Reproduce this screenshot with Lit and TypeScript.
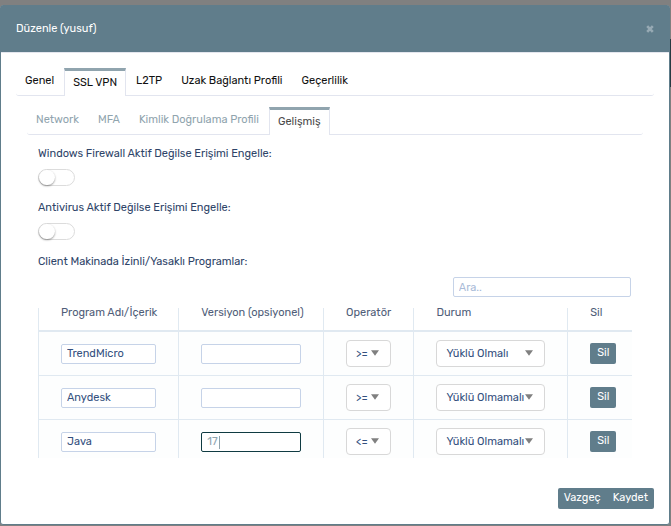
import { LitElement, html, css } from "lit";
import { customElement, state } from "lit/decorators.js";
import { classMap } from "lit/directives/class-map.js";

interface Program {
  name: string;
  version: string;
  operator: string;
  status: string;
  editing?: boolean;
}

const OPERATORS = [">=", "<=", "="];
const STATUSES = ["Yüklü Olmalı", "Yüklü Olmamalı"];

const arrow = html`<svg class="arrow" viewBox="0 0 8 6" aria-hidden="true">
  <path d="M0 0.3H8L4 5.7Z" fill="#808080" />
</svg>`;

@customElement("app-root")
export class AppRoot extends LitElement {
  @state() private tab = "SSL VPN";
  @state() private subTab = "Gelişmiş";
  @state() private programs: Program[] = [
    { name: "TrendMicro", version: "", operator: ">=", status: STATUSES[0] },
    { name: "Anydesk", version: "", operator: ">=", status: STATUSES[1] },
    { name: "Java", version: "17", operator: "<=", status: STATUSES[1], editing: true },
  ];

  static styles = css`
    :host {
      display: block;
      box-sizing: border-box;
      min-height: 100vh;
      padding: 5px 1px 1px 0;
      background: #808080;
      position: relative;
      font-family: Rubik, Roboto, "Liberation Sans", sans-serif;
      font-size: 11px;
      line-height: 16px;
      color: #2e4468;
    }
    * {
      box-sizing: border-box;
    }
    button,
    input,
    select {
      font: inherit;
      color: inherit;
      margin: 0;
    }
    button {
      border: 0;
      padding: 0;
      background: none;
      cursor: pointer;
    }
    .behind {
      position: absolute;
      right: 0;
      top: 39px;
      width: 1px;
      height: 48px;
      background: #283a42;
    }
    .dialog {
      display: flex;
      flex-direction: column;
      min-height: calc(100vh - 6px);
      border: 1px solid #607d8b;
      border-radius: 3px;
      background: #fff;
    }
    header {
      display: flex;
      align-items: center;
      justify-content: space-between;
      height: 46px;
      padding: 0 15px;
      background: #607d8b;
      color: #fff;
    }
    h1 {
      margin: 0;
      font-size: 11px;
      font-weight: 400;
    }
    .close {
      display: flex;
    }
    .close svg {
      width: 8px;
      height: 8px;
    }
    .body {
      flex: 1;
      padding: 15px 15px 0;
      border-top: 1px solid #e4e6ee;
    }
    .tabs {
      display: flex;
      gap: 1px;
      height: 28px;
      border-bottom: 1px solid #e2e5ef;
      border-radius: 3px;
    }
    .tabs button {
      height: 28px;
      padding: 0 8px 4px;
      border: 1px solid transparent;
      border-bottom: 0;
      color: #111;
      white-space: nowrap;
    }
    .tabs .active {
      border-color: #e2e5ef;
      border-top: 3px solid #90a4ae;
      padding-bottom: 2px;
      background: #fff;
    }
    .panel {
      padding: 11px 11px 0;
    }
    .tabs.sub button {
      color: #90a4ae;
    }
    .tabs.sub .active {
      color: #4a4a4a;
    }
    .content {
      padding: 11px 11px 0;
    }
    .label {
      display: block;
      height: 16px;
    }
    .switch {
      display: block;
      appearance: none;
      width: 37px;
      height: 17px;
      margin: 7px 0 14px;
      border: 1px solid #dcdcdc;
      border-radius: 9px;
      background: #fff;
      cursor: pointer;
    }
    .switch::before {
      content: "";
      display: block;
      width: 16px;
      height: 15px;
      border-radius: 8px;
      background: #fff;
      box-shadow: 0 1px 2px rgba(0, 0, 0, 0.4);
    }
    .switch:checked {
      background: #607d8b;
    }
    .switch:checked::before {
      margin-left: auto;
    }
    .field {
      display: block;
      width: 100%;
      height: 20px;
      padding: 0 5px;
      border: 1px solid #c6d3e8;
      border-radius: 2px;
      background: #fff;
      color: #34507e;
      outline: 0;
    }
    .field::placeholder {
      color: #a9bbd8;
      opacity: 1;
    }
    .search {
      width: 30%;
      margin: 7px 1px 11px auto;
    }
    table {
      width: 100%;
      table-layout: fixed;
      border-spacing: 0;
      border-collapse: separate;
    }
    th,
    td {
      padding: 8px 22px;
      text-align: left;
      font-weight: 400;
      vertical-align: middle;
      border-left: 1px solid #e0e9f1;
      border-bottom: 1px solid #e0e9f1;
      background: #fdfefe;
    }
    th {
      padding: 0 22px 13px;
      line-height: 9px;
      border-bottom-width: 2px;
      background: #fff;
      color: #4f5d78;
      white-space: nowrap;
    }
    th:last-child,
    td:last-child {
      padding-right: 0;
    }
    tr:last-child td {
      padding-bottom: 3px;
      border-bottom: 0;
    }
    .c1 { width: 23.6%; }
    .c2 { width: 24.4%; }
    .c3 { width: 15.2%; }
    .c4 { width: 25.9%; }
    .c5 { width: 10.9%; }
    .cell {
      position: relative;
    }
    .editing .field {
      border-color: #0f3b42;
      color: #90a4ae;
      caret-color: transparent;
    }
    .caret {
      position: absolute;
      left: 18px;
      top: 4px;
      width: 1px;
      height: 13px;
      background: #90a4ae;
    }
    .pick {
      display: block;
      width: 100%;
      height: 27px;
      padding: 0 0 0 9px;
      appearance: none;
      border: 1px solid #d8d8d8;
      border-radius: 4px;
      background: #fff;
      color: #34507e;
    }
    .arrow {
      position: absolute;
      right: 12px;
      top: 10px;
      width: 8px;
      height: 6px;
      pointer-events: none;
    }
    .solid {
      display: block;
      height: 21px;
      padding: 0 7px 1px;
      border-radius: 2px;
      background: #607d8b;
      color: #fff;
    }
    footer {
      display: flex;
      justify-content: flex-end;
      padding: 15px;
    }
    footer .solid {
      padding: 0 6px 1px;
    }
    footer .solid:first-child {
      border-radius: 2px 0 0 2px;
    }
    footer .solid:last-child {
      border-radius: 0 2px 2px 0;
    }
  `;

  private tabs(names: string[], current: string, select: (n: string) => void, sub = false) {
    return html`<div class=${classMap({ tabs: true, sub })} role="tablist">
      ${names.map(
        (n) => html`<button
          role="tab"
          aria-selected=${n === current ? "true" : "false"}
          class=${classMap({ active: n === current })}
          @click=${() => select(n)}
        >${n}</button>`
      )}
    </div>`;
  }

  private pick(label: string, options: string[], value: string) {
    return html`<div class="cell">
      <select class="pick" aria-label=${label}>
        ${options.map((o) => html`<option ?selected=${o === value}>${o}</option>`)}
      </select>
      ${arrow}
    </div>`;
  }

  private row(p: Program) {
    return html`<tr>
      <td><input class="field" aria-label="Program Adı/İçerik" .value=${p.name} /></td>
      <td>
        <div class=${classMap({ cell: true, editing: !!p.editing })}>
          <input class="field" aria-label="Versiyon (opsiyonel)" .value=${p.version} />
          ${p.editing ? html`<span class="caret"></span>` : ""}
        </div>
      </td>
      <td>${this.pick("Operatör", OPERATORS, p.operator)}</td>
      <td>${this.pick("Durum", STATUSES, p.status)}</td>
      <td>
        <button
          class="solid"
          @click=${() => (this.programs = this.programs.filter((x) => x !== p))}
        >Sil</button>
      </td>
    </tr>`;
  }

  render() {
    return html`
      <div class="behind"></div>
      <div class="dialog" role="dialog" aria-labelledby="title">
        <header>
          <h1 id="title">Düzenle (yusuf)</h1>
          <button class="close" aria-label="Kapat">
            <svg viewBox="0 0 8 8">
              <path d="M1.2 1.2L6.8 6.8M6.8 1.2L1.2 6.8" stroke="#97aab4" stroke-width="2.6" />
            </svg>
          </button>
        </header>
        <div class="body">
          ${this.tabs(
            ["Genel", "SSL VPN", "L2TP", "Uzak Bağlantı Profili", "Geçerlilik"],
            this.tab,
            (n) => (this.tab = n)
          )}
          <div class="panel">
            ${this.tabs(
              ["Network", "MFA", "Kimlik Doğrulama Profili", "Gelişmiş"],
              this.subTab,
              (n) => (this.subTab = n),
              true
            )}
            <div class="content">
              <label class="label" for="firewall">Windows Firewall Aktif Değilse Erişimi Engelle:</label>
              <input class="switch" id="firewall" type="checkbox" role="switch" />
              <label class="label" for="antivirus">Antivirus Aktif Değilse Erişimi Engelle:</label>
              <input class="switch" id="antivirus" type="checkbox" role="switch" />
              <span class="label" id="programs">Client Makinada İzinli/Yasaklı Programlar:</span>
              <input class="field search" type="text" placeholder="Ara.." aria-label="Ara" />
              <table aria-labelledby="programs">
                <colgroup>
                  <col class="c1" /><col class="c2" /><col class="c3" /><col class="c4" /><col class="c5" />
                </colgroup>
                <thead>
                  <tr>
                    <th>Program Adı/İçerik</th>
                    <th>Versiyon (opsiyonel)</th>
                    <th>Operatör</th>
                    <th>Durum</th>
                    <th>Sil</th>
                  </tr>
                </thead>
                <tbody>${this.programs.map((p) => this.row(p))}</tbody>
              </table>
            </div>
          </div>
        </div>
        <footer>
          <button class="solid">Vazgeç</button>
          <button class="solid">Kaydet</button>
        </footer>
      </div>
    `;
  }
}
